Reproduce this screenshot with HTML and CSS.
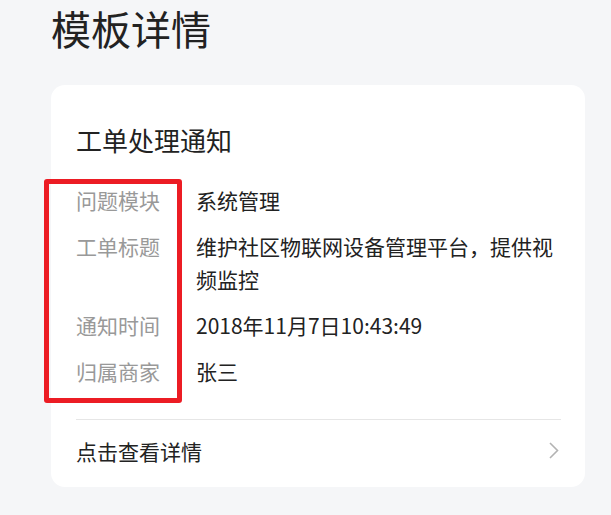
FILE: index.html
```html
<!DOCTYPE html>
<html lang="zh-CN">
<head>
    <meta charset="UTF-8">
    <meta name="viewport" content="width=device-width, initial-scale=1.0">
    <title>模板详情</title>
    <link rel="stylesheet" href="styles.css">
</head>
<body>

    <h1 class="page-title">模板详情</h1>

    <div class="card">
        <div class="card-title">工单处理通知</div>

        <div class="fields">
            <div class="field">
                <div class="label">问题模块</div>
                <div class="value">系统管理</div>
            </div>
            <div class="field">
                <div class="label">工单标题</div>
                <div class="value">维护社区物联网设备管理平台，提供视频监控</div>
            </div>
            <div class="field">
                <div class="label">通知时间</div>
                <div class="value">2018年11月7日10:43:49</div>
            </div>
            <div class="field">
                <div class="label">归属商家</div>
                <div class="value">张三</div>
            </div>
        </div>

        <div class="highlight"></div>

        <div class="card-footer">
            <span>点击查看详情</span>
            <svg class="arrow" width="10" height="17" viewBox="0 0 10 17">
                <path d="M1 1 L8.5 8.5 L1 16" fill="none" stroke="#b3b3b3" stroke-width="1.6"/>
            </svg>
        </div>
    </div>

</body>
</html>
```

FILE: styles.css
```css
body {
    margin: 0;
    padding: 0 26px 0 51px;
    background-color: #f5f6f8;
    font-family: "Noto Sans CJK SC", "Noto Sans", sans-serif;
    color: #222;
}

.page-title {
    margin: 0;
    font-size: 40px;
    font-weight: 400;
    line-height: 56px;
}

.card {
    position: relative;
    margin-top: 29px;
    padding: 37px 24px 0 25px;
    background-color: #fff;
    border-radius: 14px;
}

.card-title {
    font-size: 26px;
    line-height: 36px;
}

.fields {
    margin-top: 20px;
    padding-bottom: 24px;
    border-bottom: 1px solid #e6e6e6;
}

.field {
    display: flex;
    font-size: 21px;
    line-height: 33px;
    padding: 6px 0 7px;
}

.label {
    width: 120px;
    flex-shrink: 0;
    color: #999;
}

.value {
    flex: 1;
    color: #222;
}

.highlight {
    position: absolute;
    left: -7px;
    top: 94px;
    width: 128px;
    height: 214px;
    border: 5px solid #ec1c24;
    border-radius: 3px;
}

.card-footer {
    display: flex;
    align-items: center;
    justify-content: space-between;
    height: 61px;
    padding-bottom: 6px;
    font-size: 21px;
}

.arrow {
    margin-right: 2px;
}
```
